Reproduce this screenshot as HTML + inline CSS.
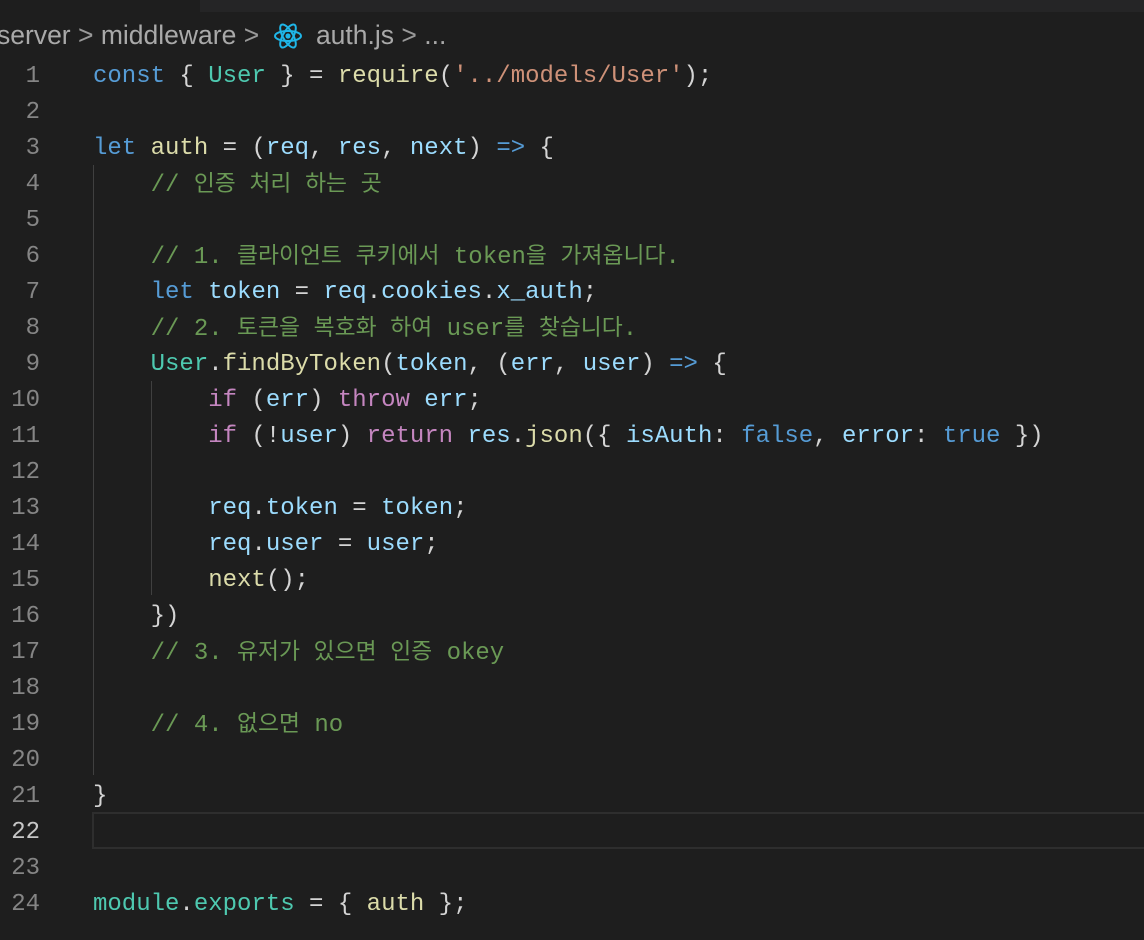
<!DOCTYPE html>
<html><head><meta charset="utf-8"><style>
html,body{margin:0;padding:0;background:#1e1e1e;width:1144px;height:940px;overflow:hidden;position:relative}
.top{position:absolute;left:200px;top:0;width:944px;height:12px;background:#252526}
.bc{position:absolute;top:18px;left:-3px;font:26.5px "Liberation Sans",sans-serif;color:#a9a9a9;white-space:pre;line-height:34px}
.code{position:absolute;left:0;top:59px;width:1144px;font:24px "Liberation Mono","Noto Sans CJK KR",monospace;color:#d4d4d4}
.l{height:36px;line-height:36px;position:relative;white-space:pre;width:1144px}
.n{position:absolute;left:0;width:40px;color:#858585;text-align:right}
.t{position:absolute;left:93px}
.k{color:#569cd6}.c{color:#4ec9b0}.f{color:#dcdcaa}.s{color:#ce9178}.v{color:#9cdcfe}.m{color:#6a9955}.p{color:#c586c0}
.h{font-size:22.8px}
.g{position:absolute;width:1px;background:#404040}
.cur{position:absolute;left:92px;top:812px;width:1060px;height:33px;border:2px solid #2e2e2e;box-sizing:content-box}
</style></head><body>
<div class="top"></div>
<div class="bc">server <span style="color:#999">&gt;</span> middleware <span style="color:#999">&gt;</span> <svg width="30" height="28" viewBox="-15 -14 30 28" style="vertical-align:-6px;margin:0 6px"><g fill="none" stroke="#1fb6e8" stroke-width="2"><ellipse rx="13" ry="5"/><ellipse rx="13" ry="5" transform="rotate(60)"/><ellipse rx="13" ry="5" transform="rotate(120)"/></g><circle r="2.6" fill="#1fb6e8"/></svg> auth.js <span style="color:#999">&gt;</span> ...</div>
<div class="g" style="left:93px;top:165px;height:610px"></div>
<div class="g" style="left:151px;top:381px;height:214px"></div>
<div class="cur"></div>
<div class="code">
<div class="l"><span class="n">1</span><span class="t"><span class="k">const</span> { <span class="c">User</span> } = <span class="f">require</span>(<span class="s">'../models/User'</span>);</span></div>
<div class="l"><span class="n">2</span></div>
<div class="l"><span class="n">3</span><span class="t"><span class="k">let</span> <span class="f">auth</span> = (<span class="v">req</span>, <span class="v">res</span>, <span class="v">next</span>) <span class="k">=&gt;</span> {</span></div>
<div class="l"><span class="n">4</span><span class="t">    <span class="m">// <span class="h">인증 처리 하는 곳</span></span></span></div>
<div class="l"><span class="n">5</span></div>
<div class="l"><span class="n">6</span><span class="t">    <span class="m">// 1. <span class="h">클라이언트 쿠키에서</span> token<span class="h">을 가져옵니다</span>.</span></span></div>
<div class="l"><span class="n">7</span><span class="t">    <span class="k">let</span> <span class="v">token</span> = <span class="v">req</span>.<span class="v">cookies</span>.<span class="v">x_auth</span>;</span></div>
<div class="l"><span class="n">8</span><span class="t">    <span class="m">// 2. <span class="h">토큰을 복호화 하여</span> user<span class="h">를 찾습니다</span>.</span></span></div>
<div class="l"><span class="n">9</span><span class="t">    <span class="c">User</span>.<span class="f">findByToken</span>(<span class="v">token</span>, (<span class="v">err</span>, <span class="v">user</span>) <span class="k">=&gt;</span> {</span></div>
<div class="l"><span class="n">10</span><span class="t">        <span class="p">if</span> (<span class="v">err</span>) <span class="p">throw</span> <span class="v">err</span>;</span></div>
<div class="l"><span class="n">11</span><span class="t">        <span class="p">if</span> (!<span class="v">user</span>) <span class="p">return</span> <span class="v">res</span>.<span class="f">json</span>({ <span class="v">isAuth</span>: <span class="k">false</span>, <span class="v">error</span>: <span class="k">true</span> })</span></div>
<div class="l"><span class="n">12</span></div>
<div class="l"><span class="n">13</span><span class="t">        <span class="v">req</span>.<span class="v">token</span> = <span class="v">token</span>;</span></div>
<div class="l"><span class="n">14</span><span class="t">        <span class="v">req</span>.<span class="v">user</span> = <span class="v">user</span>;</span></div>
<div class="l"><span class="n">15</span><span class="t">        <span class="f">next</span>();</span></div>
<div class="l"><span class="n">16</span><span class="t">    })</span></div>
<div class="l"><span class="n">17</span><span class="t">    <span class="m">// 3. <span class="h">유저가 있으면 인증</span> okey</span></span></div>
<div class="l"><span class="n">18</span></div>
<div class="l"><span class="n">19</span><span class="t">    <span class="m">// 4. <span class="h">없으면</span> no</span></span></div>
<div class="l"><span class="n">20</span></div>
<div class="l"><span class="n">21</span><span class="t">}</span></div>
<div class="l"><span class="n" style="color:#c6c6c6">22</span></div>
<div class="l"><span class="n">23</span></div>
<div class="l"><span class="n">24</span><span class="t"><span class="c">module</span>.<span class="c">exports</span> = { <span class="f">auth</span> };</span></div>
</div>
</body></html>
